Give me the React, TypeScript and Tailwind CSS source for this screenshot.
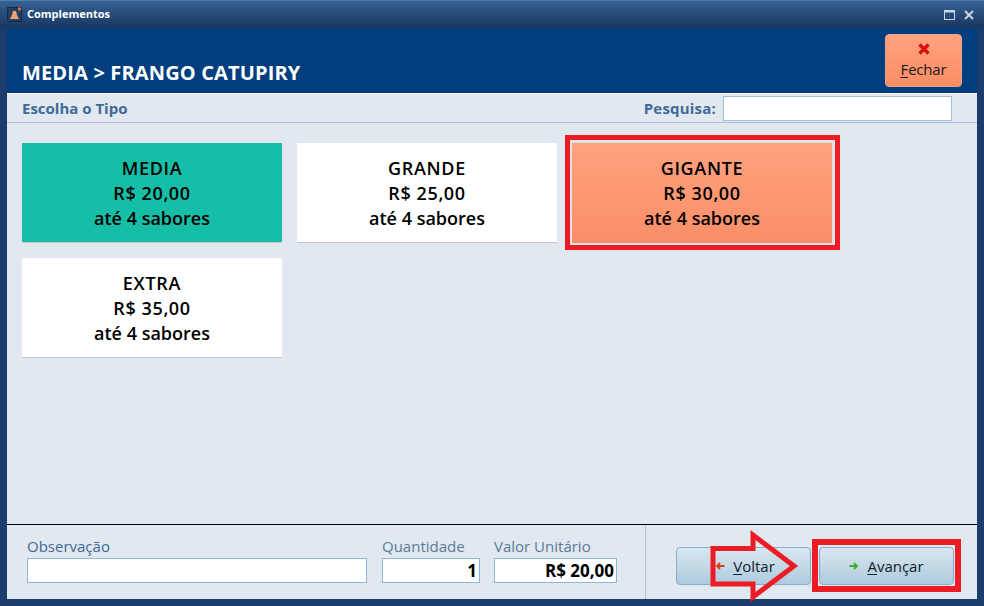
import React from 'react';

const sans = "font-['Open_Sans','Noto_Sans',sans-serif]";

const cards = [
  { name: 'MEDIA', price: 'R$ 20,00', style: 'bg-[#16bea8] border-[#c3c7cb]' },
  { name: 'GRANDE', price: 'R$ 25,00', style: 'bg-white border-[#c3c7cb]' },
  { name: 'GIGANTE', price: 'R$ 30,00', style: 'bg-gradient-to-b from-[#ffa27e] to-[#fa8e68] border-[#fa8e68] outline-2 outline-[#dfe3e6]' },
  { name: 'EXTRA', price: 'R$ 35,00', style: 'bg-white border-[#c3c7cb]' },
];

const Field = ({ label, width, value, labelColor }: { label: string; width: string; value?: string; labelColor: string }) => (
  <div className={`flex flex-col ${width}`}>
    <span className={`h-[20px] text-[15px] leading-[17px] whitespace-nowrap ${labelColor}`}>{label}</span>
    <div className="h-[25px] flex items-center justify-end bg-white border border-[#8db6d6] pr-[2px] text-[17px] font-bold text-black">
      {value}
    </div>
  </div>
);

const NavButton = ({ label, underlined, icon, extra }: { label: string; underlined: string; icon: React.ReactNode; extra?: string }) => (
  <button className={`w-[135px] h-[38px] flex items-center justify-center gap-[8px] rounded-[4px] border border-[#86add0] bg-gradient-to-b from-[#d9e7f0] to-[#aecbdc] text-[15px] text-[#10202c] ${extra ?? ''}`}>
    {icon}
    <span><span className="underline underline-offset-2">{underlined}</span>{label}</span>
  </button>
);

export default function App() {
  return (
    <div className={`relative w-[984px] h-[606px] flex flex-col bg-[#1a3d6b] overflow-hidden ${sans}`}>
      {/* Title bar */}
      <div className="h-[28px] shrink-0 flex items-center pl-[7px] pr-[10px] bg-gradient-to-b from-[#356394] to-[#1a3560] border-t border-[#4f7fb0]">
        <svg width="15" height="15" viewBox="0 0 15 15" className="mr-[5px]">
          <rect x="0.5" y="0.5" width="14" height="14" fill="#24425f" stroke="#132a40" />
          <path d="M6 4h3l1 4 2 4H3l2-4z" fill="#e9a27a" />
          <circle cx="12.5" cy="2" r="1.7" fill="#f06a2a" />
        </svg>
        <span className="text-[11px] font-bold text-white">Complementos</span>
        <div className="ml-auto flex items-center gap-[9px]">
          <svg width="11" height="10" viewBox="0 0 11 10">
            <rect x="0.5" y="0.5" width="10" height="9" fill="none" stroke="#c9d6e4" />
            <path d="M0 1.5h11" stroke="#c9d6e4" strokeWidth="2" />
          </svg>
          <svg width="10" height="10" viewBox="0 0 10 10">
            <path d="M1 1l8 8M9 1l-8 8" stroke="#c9d6e4" strokeWidth="2" />
          </svg>
        </div>
      </div>

      <div className="flex-1 flex flex-col mx-[7px] mb-[7px] bg-[#e1e8ef]">
        {/* Header */}
        <div className="h-[65px] shrink-0 flex justify-between bg-[#003e7e] pl-[15px] pr-[15px]">
          <h1 className="mt-[31px] text-[20px] leading-[27px] font-bold text-white tracking-[0.15px]">MEDIA &gt; FRANGO CATUPIRY</h1>
          <button className="mt-[6px] w-[77px] h-[53px] flex flex-col items-center pt-[7px] rounded-[4px] border border-[#e8a68a] bg-gradient-to-b from-[#ffa27e] to-[#fb8c64] text-[15px] leading-[20px] tracking-[-0.2px] text-[#1a1a1a]">
            <svg width="14" height="14" viewBox="0 0 14 14" className="mb-[3px]">
              <path d="M2.5 2.5l9 9M11.5 2.5l-9 9" stroke="#d81010" strokeWidth="3.4" />
            </svg>
            <span><span className="underline underline-offset-2">F</span>echar</span>
          </button>
        </div>

        {/* Filter strip */}
        <div className="h-[30px] shrink-0 flex items-center justify-between border-t border-white border-b border-b-[#a3bfdb] pl-[15px] pr-[25px]">
          <span className="pt-[1px] text-[15px] font-bold text-[#3f6a96]">Escolha o Tipo</span>
          <div className="flex items-center gap-[7px]">
            <span className="pt-[1px] text-[15px] font-bold text-[#3f6a96] tracking-[0.2px]">Pesquisa:</span>
            <div className="w-[229px] h-[25px] bg-white border border-[#a3bfdb]" />
          </div>
        </div>

        {/* Options */}
        <div className="flex-1 pl-[15px] pt-[20px]">
          <div className="grid grid-cols-[260px_260px_260px] gap-[15px]">
            {cards.map((card) => (
              <div key={card.name} className={`h-[100px] pt-[2px] flex flex-col items-center justify-center border-b text-[18px] leading-[25px] font-semibold text-black ${card.style}`}>
                <span className="tracking-[0.7px]">{card.name}</span>
                <span className="tracking-[0.6px]">{card.price}</span>
                <span>até 4 sabores</span>
              </div>
            ))}
          </div>
        </div>

        {/* Footer */}
        <div className="h-[75px] shrink-0 flex border-t border-black">
          <div className="w-[639px] flex pl-[20px] pt-[13px] border-r border-[#b4c2d0]">
            <Field label="Observação" width="w-[340px] mr-[15px]" labelColor="text-[#3f6a96]" />
            <Field label="Quantidade" width="w-[98px] mr-[14px]" value="1" labelColor="text-[#5a7a9a]" />
            <Field label="Valor Unitário" width="w-[123px]" value="R$ 20,00" labelColor="text-[#5a7a9a]" />
          </div>
          <div className="flex pl-[30px] pt-[22px] gap-[8px]">
            <NavButton
              label="oltar"
              underlined="V"
              extra="pl-[3px]"
              icon={
                <svg width="10" height="10" viewBox="0 0 10 10">
                  <path d="M9.5 5H2M5 2L2 5l3 3" fill="none" stroke="#e03a10" strokeWidth="1.8" />
                </svg>
              }
            />
            <NavButton
              label="vançar"
              underlined="A"
              icon={
                <svg width="10" height="10" viewBox="0 0 10 10">
                  <path d="M0.5 5H8M5 2l3 3-3 3" fill="none" stroke="#3fae1e" strokeWidth="1.8" />
                </svg>
              }
            />
          </div>
        </div>
      </div>

      {/* Red annotations drawn over the screenshot */}
      <div className="absolute left-[565px] top-[135px] w-[275px] h-[115px] border-[5px] border-[#ed1c24]" />
      <div className="absolute left-[812px] top-[539px] w-[149px] h-[53px] border-[6px] border-[#ed1c24]" />
      <svg className="absolute left-[708px] top-[528px]" width="92" height="76" viewBox="0 0 92 76">
        <path d="M5 20.5H45V7L86 38 45 69V56H5z" fill="none" stroke="#ed1c24" strokeWidth="5" />
      </svg>
    </div>
  );
}
